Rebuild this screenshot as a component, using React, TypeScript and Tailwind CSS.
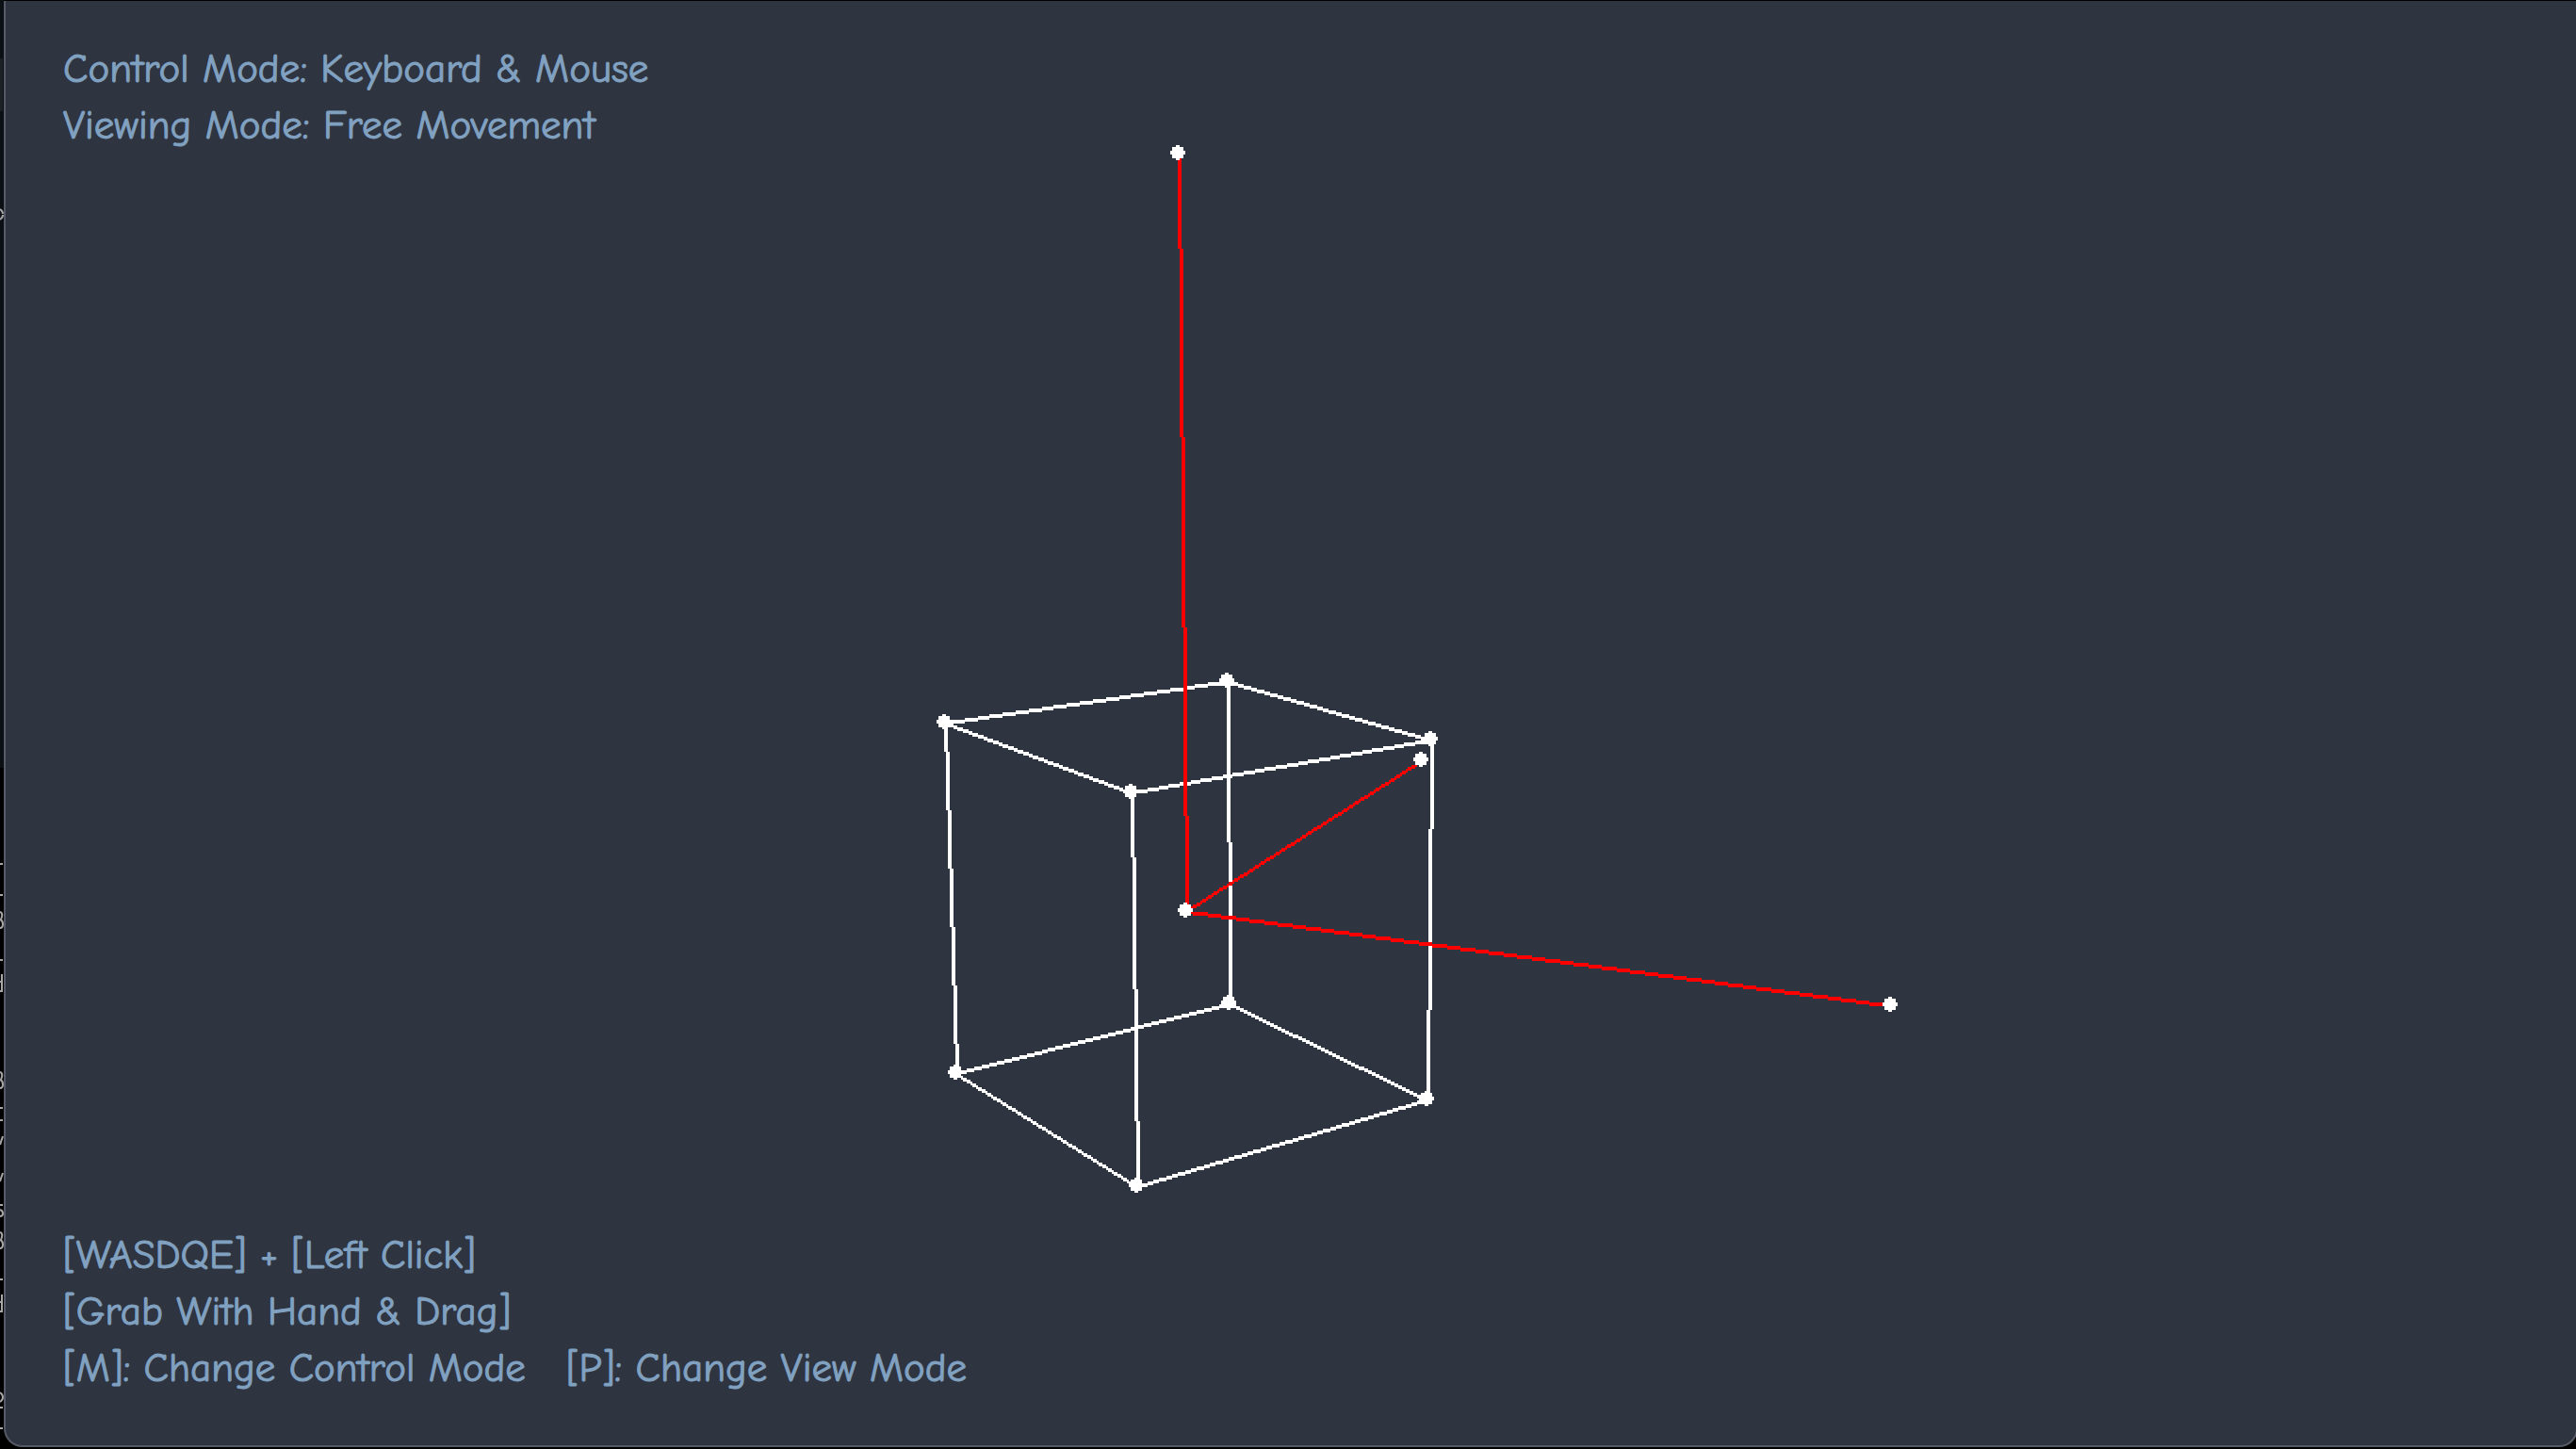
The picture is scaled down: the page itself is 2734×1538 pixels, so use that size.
type Point = [number, number];

/* Scene geometry. Every coordinate is on the renderer's 2px grid. */
const CELL = 2;

const cube: Point[] = [
  [1002, 766],
  [1302, 722],
  [1518, 784],
  [1200, 840],
  [1014, 1138],
  [1304, 1064],
  [1514, 1166],
  [1206, 1258],
];

const cubeEdges: Point[] = [
  [0, 1], [1, 2], [2, 3], [3, 0],
  [4, 5], [5, 6], [6, 7], [7, 4],
  [0, 4], [1, 5], [2, 6], [3, 7],
];

const origin: Point = [1258, 966];
const axisTips: Point[] = [
  [1250, 162],
  [1508, 806],
  [2006, 1066],
];

/* An aliased line two cells thick, as a run of rectangles. */
function linePath([x0, y0]: Point, [x1, y1]: Point): string {
  const dx = (x1 - x0) / CELL;
  const dy = (y1 - y0) / CELL;
  const steps = Math.max(Math.abs(dx), Math.abs(dy));
  const steep = Math.abs(dy) > Math.abs(dx);
  let d = "";
  for (let i = 0; i <= steps; i++) {
    const x = x0 + Math.round((dx * i) / steps) * CELL;
    const y = y0 + Math.round((dy * i) / steps) * CELL;
    d += steep ? `M${x} ${y}h4v2h-4z` : `M${x} ${y}h2v4h-2z`;
  }
  return d;
}

/* An aliased disc, eight cells across. */
function dotPath([x, y]: Point): string {
  return [
    `M${x - 2} ${y - 8}h4v16h-4z`,
    `M${x - 6} ${y - 6}h12v12h-12z`,
    `M${x - 8} ${y - 2}h16v4h-16z`,
  ].join("");
}

function Scene() {
  return (
    <svg
      className="absolute inset-0 size-full"
      viewBox="6 1 2728 1533"
      shapeRendering="crispEdges"
      role="img"
      aria-label="Wireframe cube with three axes"
    >
      <g fill="#ffffff">
        {cubeEdges.map(([a, b]) => (
          <path key={`${a}-${b}`} d={linePath(cube[a], cube[b])} />
        ))}
      </g>
      <g fill="#ff0000">
        {axisTips.map((tip) => (
          <path key={tip.join()} d={linePath(origin, tip)} />
        ))}
      </g>
      <g fill="#ffffff">
        {[...cube, origin, ...axisTips].map((p) => (
          <path key={p.join()} d={dotPath(p)} />
        ))}
      </g>
    </svg>
  );
}

/* The edge of the terminal behind the window. */
function BackgroundStrip() {
  const dashes = [917, 950, 1019, 1176, 1189, 1358, 1494, 1516];
  return (
    <svg
      className="absolute top-0 left-0 h-full w-1"
      viewBox="0 0 4 1538"
      preserveAspectRatio="xMinYMin"
      aria-hidden="true"
    >
      <rect width="4" height="815" fill="#0b1014" />
      <rect y="62" width="3" height="56" fill="#1b2127" />
      <g stroke="#a8a8a8" strokeWidth="2" fill="none">
        {dashes.map((y) => (
          <path key={y} d={`M0 ${y}h3`} />
        ))}
        <path d="M0 222q3 2 3 5M3 228q0 3 -3 5" />
        <path d="M0 968q3 1 2 5t-2 3q3 1 3 5t-3 4" />
        <path d="M2 1034v19M0 1042h2M0 1052h2" />
        <path d="M0 1138q3 1 2 5t-2 3q3 1 3 5t-3 4" />
        <path d="M3 1206l-3 9M3 1245l-3 9" />
        <path d="M3 1279h-3M0 1284q3 1 3 4t-3 3" />
        <path d="M0 1308q3 1 2 5t-2 3q3 1 3 5t-3 4" />
        <path d="M2 1374v19M0 1382h2M0 1392h2" />
        <path d="M0 1478q3 2 3 5t-3 5" />
      </g>
    </svg>
  );
}

export default function App() {
  return (
    <div className="relative flex h-screen overflow-hidden bg-black pt-px pb-0.5 pl-1">
      <BackgroundStrip />
      <main className="relative -mr-0.5 flex flex-1 flex-col justify-between overflow-hidden rounded-b-[20px] border-x-2 border-b-2 border-[#565a66] bg-[#2e3440] pt-[42px] pr-15 pb-[52px] pl-[61px] font-['Comic_Neue','Comic_Sans_MS',Lato,sans-serif] text-[43px] leading-[60px] whitespace-pre text-[#81a1c1] [-webkit-text-stroke:1px_#81a1c1]">
        <Scene />
        <header className="relative">
          <p>Control Mode: Keyboard &amp; Mouse</p>
          <p>Viewing Mode: Free Movement</p>
        </header>
        <footer className="relative">
          <p>[WASDQE] + [Left Click]</p>
          <p>[Grab With Hand &amp; Drag]</p>
          <p>{"[M]: Change Control Mode   [P]: Change View Mode"}</p>
        </footer>
      </main>
    </div>
  );
}
